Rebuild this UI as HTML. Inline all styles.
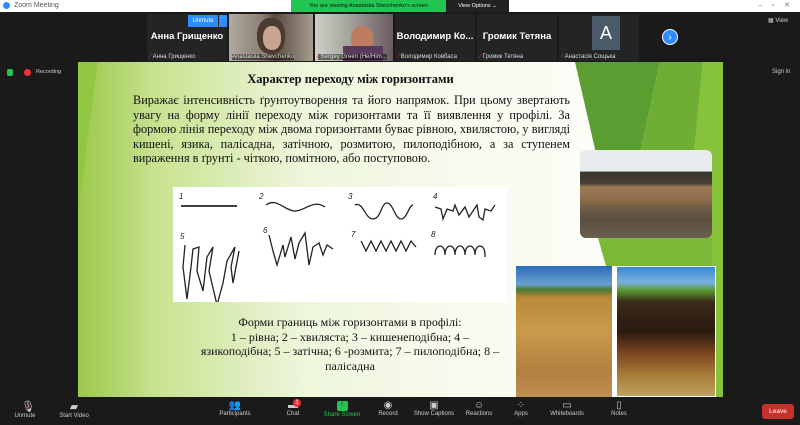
<!DOCTYPE html>
<html><head><meta charset="utf-8"><style>
*{margin:0;padding:0;box-sizing:border-box}
body{width:800px;height:425px;overflow:hidden;background:#1a1a1a;font-family:"Liberation Sans",sans-serif;position:relative}
.abs{position:absolute}
.tb{left:0;top:0;width:800px;height:12px;background:#fff;color:#555;font-size:7px;line-height:12px;padding-left:14px}
.tile{top:14px;height:47px;background:#242424;color:#fff}
.tile .nm{position:absolute;left:3px;bottom:1px;font-size:6px;color:#ddd}
.tile .big{position:absolute;width:100%;top:17px;text-align:center;font-weight:bold;font-size:9.5px}
.slide{left:78px;top:62px;width:645px;height:335px;overflow:hidden;background:linear-gradient(90deg,#9cc84a 0%,#c8e290 12%,#eef6dc 35%,#f8fbef 60%,#fff 100%)}
.serif{font-family:"Liberation Serif",serif;color:#111}
.tool{top:400px;font-size:6px;color:#ccc;text-align:center}
</style></head><body>
<div class="abs tb"><span style="display:inline-block;width:7px;height:7px;border-radius:50%;background:#2d8cff;position:absolute;left:3px;top:2px"></span>Zoom Meeting<span style="position:absolute;right:10px;color:#777">–&nbsp;&nbsp;&nbsp;&nbsp;&nbsp;▫&nbsp;&nbsp;&nbsp;&nbsp;&nbsp;✕</span></div>
<div class="abs" style="left:291px;top:0;width:155px;height:12px;background:#23c552;color:#111;font-size:5.5px;line-height:12px;text-align:center">You are viewing Anastasiia Shevchenko's screen</div>
<div class="abs" style="left:446px;top:0;width:63px;height:12px;background:#222;color:#fff;font-size:5.5px;line-height:12px;text-align:center">View Options ⌄</div>

<div class="abs tile" style="left:147px;width:80px"><div class="abs" style="left:41px;top:1px;width:30px;height:12px;background:#2d8cff;font-size:6px;line-height:12px;text-align:center">Unmute</div><div class="abs" style="left:72px;top:1px;width:8px;height:12px;background:#2d8cff;font-size:6px;text-align:center">···</div><div class="big">Анна Грищенко</div><div class="nm"><span style="color:#e33">⁄</span> Анна Грищенко</div></div>
<div class="abs tile" style="left:229px;width:84px;background:linear-gradient(90deg,#b0aaa0,#8a7f72 40%,#5a4a40 55%,#a59d90)"><div class="abs" style="left:28px;top:4px;width:28px;height:36px;border-radius:45%;background:#4a3a30"></div><div class="abs" style="left:34px;top:12px;width:18px;height:24px;border-radius:45%;background:#c9a591"></div><div class="nm" style="background:rgba(0,0,0,.5)">Anastasiia Shevchenko</div></div>
<div class="abs tile" style="left:315px;width:78px;background:linear-gradient(90deg,#cfcfc8,#a8a8a0 40%,#6a5a60)"><div class="abs" style="left:36px;top:12px;width:22px;height:26px;border-radius:45%;background:#c07c60"></div><div class="abs" style="left:28px;top:32px;width:40px;height:15px;background:#5a3a5a"></div><div class="nm" style="background:rgba(0,0,0,.5)"><span style="color:#e33">⁄</span> Sergey Green (He/Him...</div></div>
<div class="abs tile" style="left:395px;width:80px"><div class="big">Володимир Ко...</div><div class="nm"><span style="color:#e33">⁄</span> Володимир Ковбаса</div></div>
<div class="abs tile" style="left:477px;width:80px"><div class="big">Громик Тетяна</div><div class="nm"><span style="color:#e33">⁄</span> Громик Тетяна</div></div>
<div class="abs tile" style="left:559px;width:80px"><div class="abs" style="left:33px;top:2px;width:28px;height:34px;background:#4a5a6a;color:#fff;font-size:18px;text-align:center;line-height:34px">A</div><div class="nm"><span style="color:#e33">⁄</span> Анастасія Сощька</div></div>
<div class="abs" style="left:662px;top:29px;width:16px;height:16px;border-radius:50%;background:#2d8cff;color:#fff;font-size:10px;text-align:center;line-height:15px;border:1px solid #fff">›</div>
<div class="abs" style="left:768px;top:17px;font-size:6px;color:#ccc">▦ View</div>
<div class="abs" style="left:7px;top:69px;width:6px;height:7px;background:#23c552;border-radius:2px"></div>
<div class="abs" style="left:24px;top:69px;width:7px;height:7px;background:#e33;border-radius:50%"></div>
<div class="abs" style="left:36px;top:69px;font-size:5.5px;color:#ccc">Recording</div>
<div class="abs" style="left:772px;top:69px;font-size:6px;color:#ccc">Sign in</div>

<div class="abs slide">
<svg class="abs" style="left:0;top:0" width="645" height="335">
<polygon points="0,0 20,0 0,150" fill="#8cc43c" opacity=".7"/>
<polygon points="497,0 582,0 560,100 542,204 520,100" fill="#5a9e32"/>
<polygon points="582,0 625,0 605,204 542,204 560,100" fill="#6eae34"/>
<polygon points="625,0 645,0 645,335 634,335 634,204 605,204" fill="#86c23a"/>
<polygon points="520,176 634,176 634,204 528,204" fill="#7ab838"/>
</svg>
<div class="abs serif" style="left:0;width:545px;top:10px;text-align:center;font-weight:bold;font-size:12.5px">Характер переходу між горизонтами</div>
<div class="abs serif" style="left:55px;top:31px;width:437px;font-size:12.3px;line-height:14.6px;text-align:justify;text-align-last:left">Виражає інтенсивність ґрунтоутворення та його напрямок. При цьому звертають увагу на форму лінії переходу між горизонтами та її виявлення у профілі. За формою лінія переходу між двома горизонтами буває рівною, хвилястою, у вигляді кишені, язика, палісадна, затічною, розмитою, пилоподібною, а за ступенем вираження в ґрунті - чіткою, помітною, або поступовою.</div>
<svg class="abs" style="left:95px;top:125px;background:#fff" width="334" height="115" fill="none" stroke="#222" stroke-width="1.3">
<g font-size="8" font-style="italic" fill="#222" stroke="none" font-family="Liberation Sans"><text x="6" y="12">1</text><text x="86" y="12">2</text><text x="175" y="12">3</text><text x="260" y="12">4</text><text x="7" y="52">5</text><text x="90" y="46">6</text><text x="178" y="50">7</text><text x="258" y="50">8</text></g>
<path d="M8 19 H64" stroke-width="1.8"/>
<path d="M93 18 C103 10,112 24,122 24 C132 24,140 12,152 20"/>
<path d="M182 18 C190 14,192 32,200 32 C208 32,208 16,214 16 C220 16,222 32,228 32 C234 32,236 18,240 18"/>
<path d="M262 20 L268 22 L270 32 L274 22 L280 24 L282 18 L286 28 L292 20 L296 30 L300 24 L304 18 L306 30 L310 33 L312 22 L318 24 L322 18"/>
<path d="M12 58 L10 80 L14 112 L18 80 L20 62 L26 60 L24 84 L30 104 L34 70 L40 60 L36 84 L44 118 L50 96 L54 74 L62 60 L58 80 L60 96 L66 64"/>
<path d="M96 48 L100 64 L104 78 L110 58 L112 70 L118 50 L122 72 L126 56 L132 46 L136 78 L140 60 L146 56 L150 68 L154 58 L160 62"/>
<path d="M188 54 L193 64 L198 54 L203 64 L208 54 L213 64 L218 54 L223 64 L228 54 L233 64 L238 54 L243 60"/>
<path d="M262 68 C262 56,272 56,272 68 C272 56,282 56,282 68 C282 56,292 56,292 68 C292 56,302 56,302 68 C302 56,312 56,312 68 L312 70"/>
</svg>
<div class="abs serif" style="left:112px;top:253px;width:320px;text-align:center;font-size:12px;line-height:14.6px">Форми границь між горизонтами в профілі:<br>1 – рівна; 2 – хвиляста; 3 – кишенеподібна; 4 –<br>язикоподібна; 5 – затічна; 6 -розмита; 7 – пилоподібна; 8 –<br>палісадна</div>
<div class="abs" style="left:502px;top:88px;width:132px;height:88px;border-radius:6px;overflow:hidden;background:linear-gradient(180deg,#e8ecef 0%,#e8ecef 24%,#3a3530 25%,#4a4038 38%,#9a7a55 42%,#8e6e4a 56%,#6a5a44 68%,#5a4e40 80%,#6a6050 100%)"></div>
<div class="abs" style="left:438px;top:204px;width:96px;height:131px;background:linear-gradient(180deg,#2a6cb8 0%,#6aa0d0 14%,#4a7a30 18%,#b88a3a 24%,#c89a4a 50%,#b08040 80%,#c09050 100%)"></div>
<div class="abs" style="left:538px;top:204px;width:100px;height:131px;border:1px solid #fff;background:linear-gradient(180deg,#3a8ad0 0%,#7ab0e0 12%,#5a9a30 18%,#3a2a1a 27%,#2a1a10 50%,#7a4420 66%,#a8803a 85%,#c0a060 100%)"></div>
</div>

<div class="abs tool" style="left:10px;width:30px"><div style="font-size:11px;color:#ccc">🎙<span style="color:#e33;margin-left:-8px">⁄</span></div>Unmute</div>
<div class="abs tool" style="left:54px;width:40px"><div style="font-size:11px;color:#ccc">▰</div>Start Video</div>
<div class="abs tool" style="left:215px;width:40px"><div style="font-size:10px">👥</div>Participants</div>
<div class="abs tool" style="left:280px;width:26px"><div style="font-size:10px">▬</div>Chat</div>
<div class="abs" style="left:293px;top:399px;width:8px;height:8px;border-radius:50%;background:#e33;color:#fff;font-size:6px;text-align:center;line-height:8px">1</div>
<div class="abs tool" style="left:320px;width:44px;color:#23c552"><div style="margin:1px auto 1px;width:11px;height:10px;background:#23c552;border-radius:2px;color:#000;font-size:7px">↑</div>Share Screen</div>
<div class="abs tool" style="left:374px;width:28px"><div style="font-size:10px">◉</div>Record</div>
<div class="abs tool" style="left:410px;width:48px"><div style="font-size:10px">▣</div>Show Captions</div>
<div class="abs tool" style="left:463px;width:32px"><div style="font-size:10px">☺</div>Reactions</div>
<div class="abs tool" style="left:508px;width:26px"><div style="font-size:10px">⁘</div>Apps</div>
<div class="abs tool" style="left:545px;width:44px"><div style="font-size:10px">▭</div>Whiteboards</div>
<div class="abs tool" style="left:605px;width:28px"><div style="font-size:10px">▯</div>Notes</div>
<div class="abs" style="left:762px;top:404px;width:32px;height:15px;background:#c8302c;border-radius:3px;color:#fff;font-size:6.5px;text-align:center;line-height:15px">Leave</div>
</body></html>
